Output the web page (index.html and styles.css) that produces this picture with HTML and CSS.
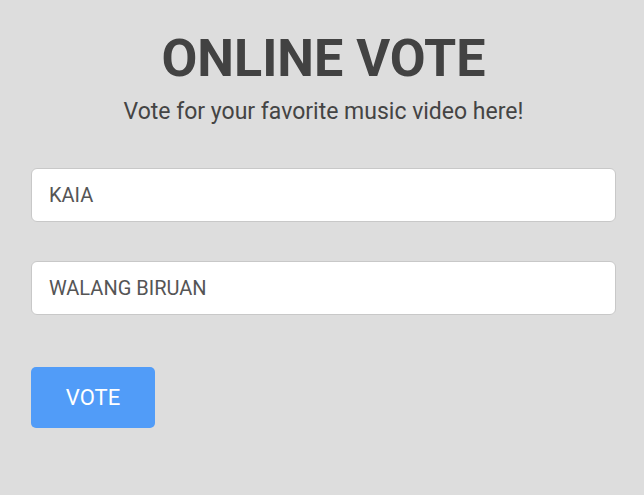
FILE: index.html
```html
<!DOCTYPE html>
<html>
<head>
<meta charset="utf-8">
<link rel="stylesheet" href="styles.css">
</head>
<body>
<div class="page">
  <h1 class="title">ONLINE VOTE</h1>
  <p class="subtitle">Vote for your favorite music video here!</p>
  <form class="form">
    <input class="field" type="text" value="KAIA">
    <input class="field" type="text" value="WALANG BIRUAN">
    <button class="btn" type="button">VOTE</button>
  </form>
</div>
</body>
</html>
```
FILE: styles.css
```css
html, body {
  margin: 0;
  padding: 0;
  background: #dddddd;
  font-family: Roboto, "Liberation Sans", sans-serif;
}
.page {
  margin: 0 28px 0 31px;
  padding-top: 30px;
  display: flex;
  flex-direction: column;
}
.title {
  margin: 0;
  text-align: center;
  font-size: 52px;
  font-weight: 700;
  color: #424242;
  line-height: 58px;
}
.subtitle {
  margin: 10px 0 0;
  text-align: center;
  font-size: 23px;
  color: #444444;
  line-height: 28px;
}
.form {
  margin-top: 42px;
  display: flex;
  flex-direction: column;
  align-items: flex-start;
}
.field {
  box-sizing: border-box;
  width: 100%;
  height: 54px;
  margin: 0 0 39px;
  padding: 0 17px;
  border: 1px solid #c8c8c8;
  border-radius: 6px;
  background: #ffffff;
  font-family: Roboto, "Liberation Sans", sans-serif;
  font-size: 20px;
  color: #555555;
  outline: none;
}
.field + .field {
  margin-bottom: 52px;
}
.btn {
  width: 124px;
  height: 61px;
  border: none;
  border-radius: 5px;
  background: #519cf8;
  color: #ffffff;
  font-family: Roboto, "Liberation Sans", sans-serif;
  font-size: 22px;
  padding: 0;
}
```
